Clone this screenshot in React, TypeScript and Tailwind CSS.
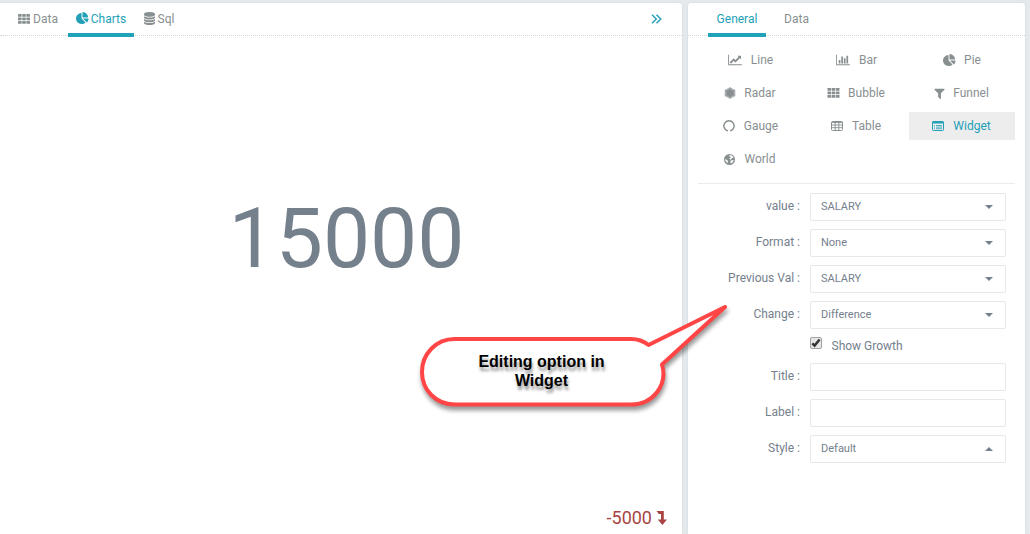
import React from "react";

type IconProps = { className?: string };

const PIE =
  "M768 890l546 546q-106 108-247.500 168t-298.500 60q-209 0-385.500-103t-279.500-279.500-103-385.500 103-385.500 279.500-279.500 385.500-103v762zm187 6h773q0 157-60 298.500t-168 247.500zm709-128h-768v-768q209 0 385.500 103t279.500 279.500 103 385.500z";
const LINE =
  "M2048 1536v128h-2048v-1536h128v1408h1920zm-128-1248v435q0 21-19.500 29.500t-35.500-7.500l-121-121-633 633q-10 10-23 10t-23-10l-233-233-416 416-192-192 585-585q10-10 23-10t23 10l233 233 464-464-121-121q-16-16-7.500-35.500t29.500-19.500h435q14 0 23 9t9 23z";
const BAR =
  "M640 896v512h-256v-512h256zm384-512v1024h-256v-1024h256zm1024 1152v128h-2048v-1536h128v1408h1920zm-640-896v768h-256v-768h256zm384-384v1152h-256v-1152h256z";
const FUNNEL =
  "M1595 295q17 41-14 70l-493 493v742q0 42-39 59-13 5-25 5-27 0-45-19l-256-256q-19-19-19-45v-486l-493-493q-31-29-14-70 17-39 59-39h1280q42 0 59 39z";
const DB =
  "M768 768q237 0 443-43t325-127v170q0 69-103 128t-280 93.500-385 34.500-385-34.500-280-93.500-103-128v-170q119 84 325 127t443 43zm0 768q237 0 443-43t325-127v170q0 69-103 128t-280 93.500-385 34.500-385-34.500-280-93.500-103-128v-170q119 84 325 127t443 43zm0-384q237 0 443-43t325-127v170q0 69-103 128t-280 93.500-385 34.500-385-34.500-280-93.500-103-128v-170q119 84 325 127t443 43zm0-1152q208 0 385 34.500t280 93.500 103 128v128q0 69-103 128t-280 93.500-385 34.500-385-34.500-280-93.500-103-128v-128q0-69 103-128t280-93.500 385-34.500z";

function Glyph({ d, w = 1792, className = "" }: { d: string; w?: number; className?: string }) {
  return (
    <svg viewBox={`0 0 ${w} 1792`} fill="currentColor" className={`shrink-0 ${className}`}>
      <path d={d} />
    </svg>
  );
}

function GridIcon({ className = "" }: IconProps) {
  return (
    <svg viewBox="0 0 12 10" fill="currentColor" className={`shrink-0 ${className}`}>
      {[0, 4.2, 8.4].map((x) =>
        [0, 3.5, 7].map((y) => <rect key={`${x}-${y}`} x={x} y={y} width="3.6" height="2.8" rx="0.4" />)
      )}
    </svg>
  );
}

function RadarIcon() {
  return (
    <svg viewBox="0 0 12 12" className="h-3 w-3 shrink-0">
      <path d="M6 .2 11.300 3.100v5.800L6 11.800.7 8.900V3.100z" fill="currentColor" fillOpacity=".7" />
      <path d="M6 2 9.600 4v4L6 10 2.400 8V4z" fill="currentColor" />
      <path d="M6 .3v11.400M1 3.100l10 5.800M11 3.100 1 8.900" stroke="currentColor" strokeWidth=".5" />
    </svg>
  );
}

function GaugeIcon() {
  return (
    <svg viewBox="0 0 12 12" className="h-3 w-3 shrink-0" fill="none" stroke="currentColor" strokeWidth="1.5">
      <path d="M4.300 11.300V10.700A5.100 5.100 0 1 1 7.700 10.700V11.300" />
    </svg>
  );
}

function TableIcon() {
  return (
    <svg viewBox="0 0 12 10" className="h-[10px] w-3 shrink-0" fill="none" stroke="currentColor">
      <rect x=".5" y=".5" width="11" height="9" rx="1" />
      <path d="M.5 1.500h11M.5 4h11M.5 6.700h11M4.200 1v9M7.800 1v9" strokeWidth=".9" />
    </svg>
  );
}

function WidgetIcon() {
  return (
    <svg viewBox="0 0 12 10" className="h-[10px] w-3 shrink-0" fill="none" stroke="currentColor">
      <rect x=".5" y=".5" width="11" height="9" rx=".8" />
      <path d="M.5 1.500h11" strokeWidth="2" />
      <path d="M2 4.500h1M4 4.500h6M2 6.100h1M4 6.100h6M2 7.700h1M4 7.700h6" strokeWidth=".8" />
    </svg>
  );
}

function GlobeIcon() {
  return (
    <svg viewBox="0 0 12 12" className="h-[11px] w-[11px] shrink-0">
      <circle cx="6" cy="6" r="6" fill="currentColor" />
      <path
        d="M6.200 1.200 9 1.900l1.600 2.300-1.200-.2-1.200 1.200-1.400 1-.9-.9 1.200-1.200-.3-1.300-1.200-.3zM7.200 7.400l2.300-.8 1 .3-1 2.100-1.900 1.400-.7-1.300zM1.200 5.400l1.500.9 1.500.8-.3 1.200.6 1.700-1.700-1-1.300-1.700z"
        fill="white"
      />
    </svg>
  );
}

const charts: { name: string; icon: React.ReactNode; gap: string }[] = [
  { name: "Line", icon: <Glyph d={LINE} w={2048} className="h-3 w-[14px]" />, gap: "gap-[9px]" },
  { name: "Bar", icon: <Glyph d={BAR} w={2048} className="h-3 w-[14px]" />, gap: "gap-[9px] pl-px" },
  { name: "Pie", icon: <Glyph d={PIE} className="h-[13px] w-[13px]" />, gap: "gap-2" },
  { name: "Radar", icon: <RadarIcon />, gap: "gap-2 pr-px" },
  { name: "Bubble", icon: <GridIcon className="h-[10px] w-[13px]" />, gap: "gap-2" },
  { name: "Funnel", icon: <Glyph d={FUNNEL} className="h-[13px] w-[13px]" />, gap: "gap-[7px] pr-[2px]" },
  { name: "Gauge", icon: <GaugeIcon />, gap: "gap-[9px]" },
  { name: "Table", icon: <TableIcon />, gap: "gap-[9px]" },
  { name: "Widget", icon: <WidgetIcon />, gap: "gap-[9px] pr-px" },
  { name: "World", icon: <GlobeIcon />, gap: "gap-[9px] pr-px" },
];

function Row({ label, value, up, select = true }: { label: string; value?: string; up?: boolean; select?: boolean }) {
  return (
    <div className="flex h-7 gap-[10px]">
      <label className="w-[102px] pt-[5px] text-right leading-4">{label} :</label>
      <div className="flex w-[196px] items-center justify-between rounded-[2px] border border-[#e4e9eb] pr-3 pl-[10px] text-[11px]">
        <span>{value}</span>
        {select && (
          <svg viewBox="0 0 8 4" className="h-1 w-2" fill="currentColor">
            <path d={up ? "M0 4 4 0l4 4z" : "M0 0h8L4 4z"} />
          </svg>
        )}
      </div>
    </div>
  );
}

export default function App() {
  return (
    <div className="relative flex h-[534px] w-[1030px] gap-1.5 overflow-hidden bg-[#e4e9ec] pt-[3px] pr-[5px] font-['Roboto',sans-serif] text-xs text-[#75808d]">
      <main className="flex w-[682px] flex-col rounded-tr-[3px] bg-white shadow-[0_0_2px_#cbd3d7]">
        <nav className="flex h-[33px] shrink-0 border-b border-dotted border-[#d5d5d5] pl-2 text-[#888f91]">
          <div className="flex h-[34px] w-[60px] items-center justify-center gap-[3px] pb-[3px]">
            <GridIcon className="h-[10px] w-3" />
            Data
          </div>
          <div className="flex h-[34px] w-[66px] items-center justify-center gap-[2px] border-b-4 border-[#20a3b9] pt-px text-[#249fb8]">
            <Glyph d={PIE} className="h-[13px] w-[13px]" />
            Charts
          </div>
          <div className="flex h-[34px] w-[50px] items-center justify-center gap-[3px] pb-[3px]">
            <Glyph d={DB} w={1536} className="h-[13px] w-[11px]" />
            Sql
          </div>
          <svg viewBox="0 0 11 10" className="mt-[11px] mr-5 ml-auto h-[10px] w-[11px] text-[#249fb8]" fill="none" stroke="currentColor" strokeWidth="1.400">
            <path d="m1 .7 4.300 4.300L1 9.300M5.500.7 9.800 5 5.500 9.300" />
          </svg>
        </nav>
        <section className="flex grow flex-col">
          <div className="pt-[153px] pl-[11px] text-center text-[84px] leading-[100px] text-[#75808d]">15000</div>
          <div className="mt-auto flex h-8 items-start justify-end gap-1 pr-[15px] text-[18px] leading-8 text-[#a94442]">
            <span>-5000</span>
            <svg viewBox="0 0 11 14" className="mt-[9px] h-[14px] w-[11px]" fill="currentColor">
              <path d="M.5 0h7.300v8.500H11L6.400 14 1.800 8.500H5V3H2.800z" />
            </svg>
          </div>
        </section>
      </main>

      <aside className="w-[337px] rounded-t-[3px] bg-white shadow-[0_0_2px_#cbd3d7]">
        <nav className="flex h-[33px] border-b border-dotted border-[#d5d5d5] pl-5 text-[#888f91]">
          <div className="h-[34px] w-[58px] border-b-4 border-[#20a3b9] pt-2 text-center leading-4 text-[#249fb8]">General</div>
          <div className="w-[61px] pt-2 text-center leading-4">Data</div>
        </nav>
        <div className="mx-[10px] grid grid-cols-[105px_106px_106px] gap-y-[5px] border-b border-[#e9ecec] pt-[10px] pb-[10px] text-[#888f91]">
          {charts.map((c) => (
            <button key={c.name} className={`flex h-7 items-center justify-center ${c.gap} ${c.name === "Widget" ? "bg-[#ededed] text-[#249fb8]" : ""}`}>
              {c.icon}
              <span>{c.name}</span>
            </button>
          ))}
        </div>
        <form className="flex flex-col gap-2 pt-[9px] pl-[10px]">
          <Row label="value" value="SALARY" />
          <Row label="Format" value="None" />
          <Row label="Previous Val" value="SALARY" />
          <Row label="Change" value="Difference" />
          <label className="flex h-[18px] items-start gap-[9.5px] pl-[112px]">
            <span className="flex h-3 w-3 items-center justify-center rounded-[2px] border border-[#a2a2a2] bg-[#e7e7e7]">
              <svg viewBox="0 0 10 10" className="h-[10px] w-[10px]" fill="none" stroke="#333" strokeWidth="2.400">
                <path d="m1.300 5.300 2.300 2.300L8.600 1.400" />
              </svg>
            </span>
            <span className="pt-px leading-4">Show Growth</span>
          </label>
          <Row label="Title" select={false} />
          <Row label="Label" select={false} />
          <Row label="Style" value="Default" up />
        </form>
      </aside>

      <div className="absolute top-[300px] left-[412px] h-[120px] w-[324px]">
        <svg viewBox="0 0 324 120" className="absolute inset-0 h-full w-full drop-shadow-[1px_4px_2px_rgba(0,0,0,0.4)]">
          <path
            d="M42.500 39H219Q229 39 236.500 45L313 7 250 64.500C256 85 241 104.500 219 104.500H42.500C24 104.500 10 90 10 72S24 39 42.500 39Z"
            fill="white"
            stroke="#ff4545"
            strokeWidth="4"
            strokeLinejoin="round"
          />
        </svg>
        <div className="absolute top-[52px] left-[39.5px] w-[180px] text-center font-['Liberation_Sans',Arial,sans-serif] text-base leading-[19px] font-bold text-black [text-shadow:1px_4px_3px_rgba(0,0,0,0.4)]">
          Editing option in
          <br />
          Widget
        </div>
      </div>
    </div>
  );
}
